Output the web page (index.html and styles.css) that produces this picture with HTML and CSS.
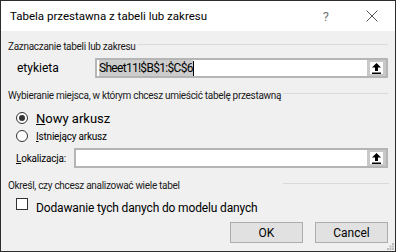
FILE: index.html
```html
<!DOCTYPE html>
<html lang="pl">
     <head>
          <meta charset="UTF-8">
          <meta name="viewport" content="width=device-width, initial-scale=1.0">
          <title>Tabela przestawna z tabeli lub zakresu</title>
          <link rel="stylesheet" href="styles.css">
     </head>
     <body>
          <div class="dialog">
               <div class="titlebar">
                    <span class="title">Tabela przestawna z tabeli lub zakresu</span>
                    <span class="help">?</span>
                    <svg class="close" width="12" height="12" viewBox="0 0 12 12">
                         <path d="M0.5 0.5 L11.5 11.5 M11.5 0.5 L0.5 11.5" stroke="#555" stroke-width="1" fill="none"/>
                    </svg>
               </div>
               <div class="content">
                    <div class="group-label">
                         <span>Zaznaczanie tabeli lub zakresu</span>
                         <div class="line"></div>
                    </div>
                    <div class="row range-row">
                         <span class="field-label wide">etykieta</span>
                         <div class="ref-input">
                              <div class="ref-text"><span class="selected">Sheet11!$B$1:$C$6</span><span class="caret"></span></div>
                              <div class="ref-btn">
                                   <div class="ref-btn-inner">
                                        <svg width="9" height="11" viewBox="0 0 9 11">
                                             <path d="M4.5 0 L9 4.5 L6 4.5 L6 8 L3 8 L3 4.5 L0 4.5 Z" fill="#000"/>
                                             <rect x="0" y="9.5" width="9" height="1.5" fill="#000"/>
                                        </svg>
                                   </div>
                              </div>
                         </div>
                    </div>
                    <div class="group-label second">
                         <span>Wybieranie miejsca, w którym chcesz umieścić tabelę przestawną</span>
                         <div class="line"></div>
                    </div>
                    <div class="option first">
                         <span class="radio checked"></span>
                         <span class="option-text big"><u>N</u>owy arkusz</span>
                    </div>
                    <div class="option">
                         <span class="radio"></span>
                         <span class="option-text"><u>I</u>stniejący arkusz</span>
                    </div>
                    <div class="row location-row">
                         <span class="field-label"><u>L</u>okalizacja:</span>
                         <div class="ref-input">
                              <div class="ref-text"></div>
                              <div class="ref-btn">
                                   <div class="ref-btn-inner">
                                        <svg width="9" height="11" viewBox="0 0 9 11">
                                             <path d="M4.5 0 L9 4.5 L6 4.5 L6 8 L3 8 L3 4.5 L0 4.5 Z" fill="#000"/>
                                             <rect x="0" y="9.5" width="9" height="1.5" fill="#000"/>
                                        </svg>
                                   </div>
                              </div>
                         </div>
                    </div>
                    <div class="group-label third">
                         <span>Określ, czy chcesz analizować wiele tabel</span>
                         <div class="line"></div>
                    </div>
                    <div class="option check-row">
                         <span class="checkbox"></span>
                         <span class="option-text big">Dodawanie tych danych do modelu danych</span>
                    </div>
                    <div class="buttons">
                         <button class="btn">OK</button>
                         <button class="btn">Cancel</button>
                    </div>
               </div>
               <svg class="grip" width="7" height="7" viewBox="0 0 7 7">
                    <rect x="5" y="0" width="2" height="2" fill="#bdbdbd"/>
                    <rect x="2.5" y="2.5" width="2" height="2" fill="#bdbdbd"/>
                    <rect x="5" y="2.5" width="2" height="2" fill="#bdbdbd"/>
                    <rect x="0" y="5" width="2" height="2" fill="#bdbdbd"/>
                    <rect x="2.5" y="5" width="2" height="2" fill="#bdbdbd"/>
                    <rect x="5" y="5" width="2" height="2" fill="#bdbdbd"/>
               </svg>
          </div>
     </body>
</html>
```

FILE: styles.css
```css
body {
     margin: 0;
     padding: 0;
     font-family: Roboto, "Noto Sans", sans-serif;
     color: #000;
}
.dialog {
     position: relative;
     width: 396px;
     height: 252px;
     box-sizing: border-box;
     border: 1px solid #2d2d2d;
     background-color: #f0f0f0;
}
.titlebar {
     height: 30px;
     background-color: #fff;
     display: flex;
     align-items: center;
     padding-left: 9px;
     font-size: 11.5px;
}
.title {
     flex: 1;
}
.help {
     color: #777;
     font-size: 13px;
     margin-right: 37px;
}
.close {
     margin-right: 17px;
}
.content {
     padding: 0 7px 0 7px;
     display: flex;
     flex-direction: column;
}
.group-label {
     display: flex;
     align-items: flex-start;
     font-size: 10px;
     line-height: 14px;
     height: 14px;
     margin-top: 9px;
     letter-spacing: -0.3px;
     color: #1a1a1a;
}
.group-label .line {
     flex: 1;
     height: 1px;
     background-color: #dadada;
     margin-top: 4px;
     margin-left: 2px;
}
.group-label.second {
     margin-top: 11px;
}
.group-label.third {
     margin-top: 11px;
}
.group-label.third .line {
     flex: none;
     width: 106px;
     margin-left: auto;
     margin-right: -1px;
}
.row {
     display: flex;
     align-items: center;
}
.range-row {
     margin-top: 4px;
}
.field-label {
     font-size: 10px;
     letter-spacing: -0.2px;
     width: 66px;
     padding-left: 8px;
     box-sizing: border-box;
}
.field-label.wide {
     font-size: 12px;
     letter-spacing: 0;
     width: 87px;
     padding-left: 9px;
}
.ref-input {
     flex: 1;
     height: 20px;
     box-sizing: border-box;
     border: 2px solid #b5b5b5;
     background-color: #fff;
     display: flex;
}
.ref-text {
     flex: 1;
     display: flex;
     align-items: center;
     padding-left: 2px;
     font-size: 12px;
}
.selected {
     background-color: #cccccc;
     line-height: 16px;
     letter-spacing: -0.7px;
}
.caret {
     width: 1px;
     height: 15px;
     background-color: #000;
}
.ref-btn {
     width: 19px;
     background-color: #c8c8c8;
     display: flex;
     align-items: center;
     justify-content: center;
}
.ref-btn-inner {
     width: 13px;
     height: 12px;
     background-color: #fff;
     display: flex;
     align-items: center;
     justify-content: center;
}
.option {
     display: flex;
     align-items: center;
     height: 16px;
     padding-left: 8px;
     margin-top: 2px;
}
.option.first {
     margin-top: 7px;
}
.radio {
     width: 10px;
     height: 10px;
     border: 1px solid #333;
     border-radius: 50%;
     background-color: #fff;
     position: relative;
     margin-right: 8px;
}
.radio.checked::after {
     content: "";
     position: absolute;
     left: 2px;
     top: 2px;
     width: 6px;
     height: 6px;
     border-radius: 50%;
     background-color: #333;
}
.option-text {
     font-size: 10px;
     letter-spacing: -0.2px;
}
.option-text.big {
     font-size: 13px;
     letter-spacing: 0;
}
.location-row {
     margin-top: 4px;
}
.check-row {
     margin-top: 4px;
     height: 18px;
     align-items: flex-start;
}
.checkbox {
     width: 10px;
     height: 10px;
     border: 1px solid #333;
     background-color: #fff;
     margin-top: 1px;
     margin-right: 8px;
}
.check-row .option-text.big {
     font-size: 12px;
     letter-spacing: -0.15px;
     line-height: 16px;
     margin-top: 3px;
}
.buttons {
     display: flex;
     justify-content: flex-end;
     gap: 12px;
     margin-top: 7px;
}
.btn {
     width: 73px;
     height: 21px;
     border: 1px solid #adadad;
     background-color: #e1e1e1;
     font-family: Roboto, "Noto Sans", sans-serif;
     font-size: 12px;
     padding: 0;
     color: #000;
}
.grip {
     position: absolute;
     right: 1px;
     bottom: 1px;
}
```
